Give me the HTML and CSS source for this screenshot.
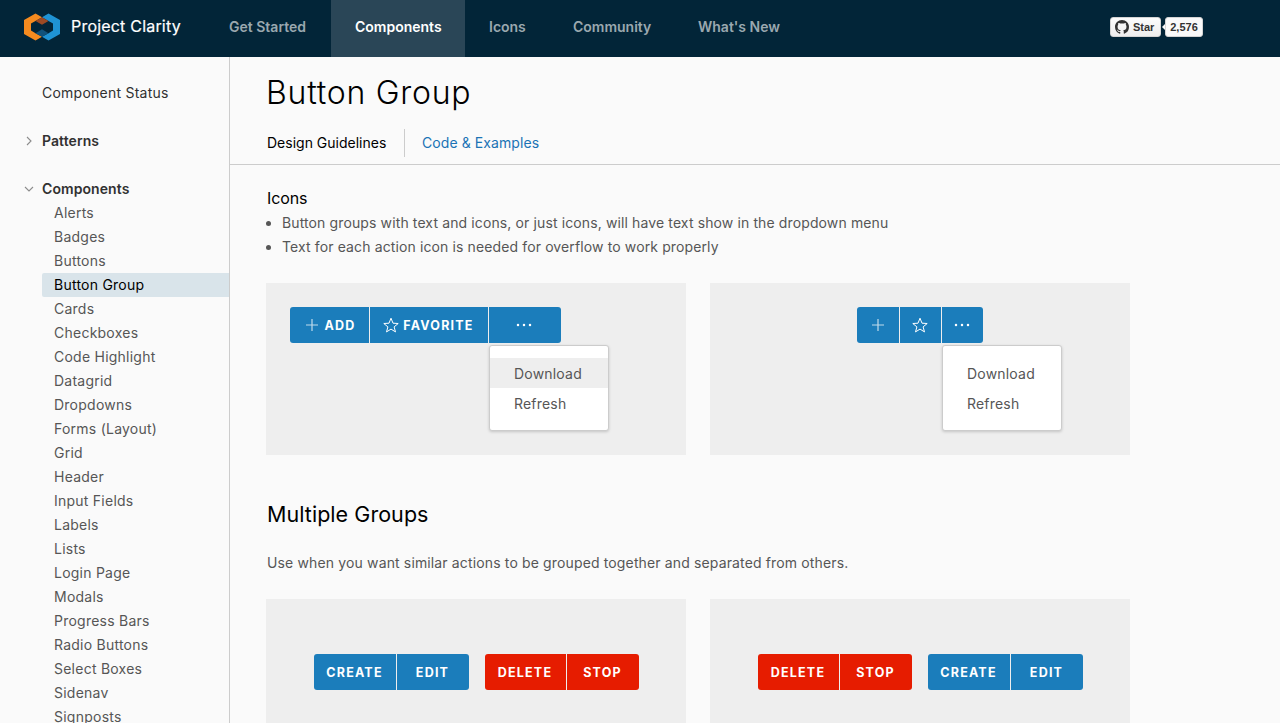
FILE: index.html
```html
<!DOCTYPE html>
<html lang="en">
<head>
<meta charset="utf-8">
<title>Project Clarity - Button Group</title>
<link rel="stylesheet" href="styles.css">
</head>
<body>
<svg class="defs" width="0" height="0">
  <symbol id="plus" viewBox="0 0 16 16"><path d="M8 2v12M2 8h12" stroke="#fff" stroke-opacity=".72" stroke-width="1.2" fill="none"/></symbol>
  <symbol id="star" viewBox="0 0 16 16"><path d="M8 1.2l2 5 5.2.3-4.1 3.4 1.4 5L8 12.1l-4.5 2.8 1.4-5L.8 6.5 6 6.2z" stroke="#fff" stroke-width="1" stroke-linejoin="round" fill="none"/></symbol>
  <symbol id="dots" viewBox="0 0 16 16"><circle cx="2" cy="8" r="1.25" fill="#fff"/><circle cx="8" cy="8" r="1.25" fill="#fff"/><circle cx="14" cy="8" r="1.25" fill="#fff"/></symbol>
</svg>
<header class="header">
  <a class="brand">
    <svg class="logo" width="36" height="28" viewBox="0 0 36 28">
      <path fill="#1f93d4" d="M24.500.5L36 7v14l-11.500 6.500L18 23.800l6.500-3.600 4.500-2.700v-7L24.500 8 18 4.200z"/>
      <path fill="#f58b1f" d="M11.500.5L18 4.200 11.500 8 7 10.500v7l4.500 2.700 6.500 3.600-6.500 3.700L0 21V7z"/>
      <path fill="#9c4a24" d="M18 4.200L24.500 8 18 11.700 11.500 8z"/>
      <path fill="#11527b" d="M18 16.300l6.500 3.900-6.500 3.600-6.500-3.600z"/>
    </svg>
    <span class="brand-name">Project Clarity</span>
  </a>
  <nav class="nav">
    <a>Get Started</a>
    <a class="active">Components</a>
    <a>Icons</a>
    <a>Community</a>
    <a>What's New</a>
  </nav>
  <div class="github">
    <a class="gh-star"><svg width="14" height="14" viewBox="0 0 16 16"><path fill="#333" d="M8 0C3.580 0 0 3.580 0 8c0 3.540 2.290 6.530 5.470 7.590.4.070.55-.17.55-.38 0-.19-.01-.82-.01-1.490-2.010.37-2.530-.49-2.690-.94-.09-.23-.48-.94-.82-1.130-.28-.15-.68-.52-.01-.53.63-.01 1.080.58 1.230.82.72 1.210 1.870.87 2.330.66.07-.52.28-.87.51-1.070-1.780-.2-3.640-.89-3.640-3.950 0-.87.31-1.590.82-2.150-.08-.2-.36-1.020.08-2.120 0 0 .67-.21 2.200.82a7.600 7.600 0 0 1 4 0c1.530-1.040 2.200-.82 2.200-.82.44 1.100.16 1.920.08 2.120.51.56.82 1.270.82 2.150 0 3.070-1.870 3.750-3.650 3.950.29.25.54.73.54 1.480 0 1.070-.01 1.930-.01 2.200 0 .21.15.46.55.38A8.010 8.010 0 0 0 16 8c0-4.420-3.580-8-8-8z"/></svg>Star</a>
    <a class="gh-count">2,576</a>
  </div>
</header>
<div class="page">
  <aside class="sidebar">
    <a class="top status">Component Status</a>
    <a class="top bold"><svg class="caret" width="10" height="10" viewBox="0 0 10 10"><path d="M3 1l4 4-4 4"/></svg>Patterns</a>
    <a class="top bold open"><svg class="caret" width="10" height="10" viewBox="0 0 10 10"><path d="M1 3l4 4 4-4"/></svg>Components</a>
    <ul class="links">
      <li>Alerts</li><li>Badges</li><li>Buttons</li><li class="current">Button Group</li><li>Cards</li><li>Checkboxes</li><li>Code Highlight</li><li>Datagrid</li><li>Dropdowns</li><li>Forms (Layout)</li><li>Grid</li><li>Header</li><li>Input Fields</li><li>Labels</li><li>Lists</li><li>Login Page</li><li>Modals</li><li>Progress Bars</li><li>Radio Buttons</li><li>Select Boxes</li><li>Sidenav</li><li>Signposts</li>
    </ul>
  </aside>
  <main class="main">
    <div class="title-area">
      <h1>Button Group</h1>
      <div class="tabs"><a class="tab-on">Design Guidelines</a><a class="tab-link">Code &amp; Examples</a></div>
    </div>
    <div class="content">
      <h4>Icons</h4>
      <ul class="bullets">
        <li>Button groups with text and icons, or just icons, will have text show in the dropdown menu</li>
        <li>Text for each action icon is needed for overflow to work properly</li>
      </ul>
      <div class="cards">
        <div class="card">
          <div class="group">
            <a class="btn w-add"><svg width="16" height="16"><use href="#plus"/></svg>ADD</a>
            <a class="btn w-fav"><svg width="16" height="16"><use href="#star"/></svg>FAVORITE</a>
            <div class="more"><a class="btn w-std dots"><svg width="16" height="16"><use href="#dots"/></svg></a>
              <div class="menu"><a class="hover">Download</a><a>Refresh</a></div></div>
          </div>
        </div>
        <div class="card card-mid">
          <div class="group">
            <a class="btn w-icon1"><svg width="16" height="16"><use href="#plus"/></svg></a>
            <a class="btn w-icon"><svg width="16" height="16"><use href="#star"/></svg></a>
            <div class="more"><a class="btn w-icon"><svg width="16" height="16"><use href="#dots"/></svg></a>
              <div class="menu"><a>Download</a><a>Refresh</a></div></div>
          </div>
        </div>
      </div>
      <h3>Multiple Groups</h3>
      <p class="lead">Use when you want similar actions to be grouped together and separated from others.</p>
      <div class="cards">
        <div class="card card-multi">
          <div class="group"><a class="btn w-create">CREATE</a><a class="btn w-std">EDIT</a></div>
          <div class="group"><a class="btn red w-delete">DELETE</a><a class="btn red w-std">STOP</a></div>
        </div>
        <div class="card card-multi">
          <div class="group"><a class="btn red w-delete">DELETE</a><a class="btn red w-std">STOP</a></div>
          <div class="group"><a class="btn w-create">CREATE</a><a class="btn w-std">EDIT</a></div>
        </div>
      </div>
    </div>
  </main>
</div>
</body>
</html>
```
FILE: styles.css
```css
* { box-sizing: border-box; }
html, body { height: 100%; margin: 0; overflow: hidden; }
body { display: flex; flex-direction: column; background: #fafafa; color: #565656; font: 14px/24px Inter, "Open Sans", sans-serif; letter-spacing: .12px; }
.defs { display: none; }
ul { list-style: none; margin: 0; padding: 0; }
h1, h3, h4, p { margin: 0; font-weight: 400; }
.header { flex: none; display: flex; height: 57px; background: #022538; }
.brand { display: flex; width: 205px; padding: 13px 0 0 24px; gap: 11px; color: #fff; white-space: nowrap; }
.logo { flex: none; }
.brand-name { font-size: 16px; line-height: 27px; letter-spacing: .2px; -webkit-text-stroke: .2px #fff; }
.nav { display: grid; grid-template-columns: 126px 134px 84px 125px 130px; width: 599px; letter-spacing: 0; }
.nav a { padding-left: 24px; line-height: 54px; font-weight: 600; color: #9aa8af; white-space: nowrap; }
.nav .active { background: #2a4657; color: #fff; }
.github { display: flex; gap: 5px; margin-left: 306px; padding-top: 17px; font: bold 11px/19px "Liberation Sans", sans-serif; color: #333; letter-spacing: 0; }
.gh-star, .gh-count { display: flex; align-items: center; height: 20px; border-radius: 3px; border: 1px solid #d4d4d4; }
.gh-star { width: 51px; gap: 4px; padding-left: 4px; background: linear-gradient(#fcfcfc, #eee); }
.gh-count { position: relative; width: 38px; justify-content: center; margin-left: -1px; background: #fafafa; }
.gh-count::before { content: ""; position: absolute; left: -4px; top: 6px; border: 3px solid transparent; border-right-color: #fafafa; border-left: 0; }
.page { flex: 1; min-height: 0; display: flex; }
.sidebar { flex: none; width: 230px; padding-top: 24px; border-right: 1px solid #ccc; overflow: hidden; letter-spacing: .24px; }
.top { display: flex; align-items: center; height: 24px; margin-bottom: 24px; padding-left: 24px; color: #313131; gap: 8px; }
.status { padding-left: 42px; }
.bold { font-weight: 600; letter-spacing: .08px; }
.open { margin-bottom: 0; }
.caret { flex: none; fill: none; stroke: #8c8c8c; stroke-width: 1.1; }
.links { margin-left: 42px; }
.links li { height: 24px; padding-left: 12px; }
.links .current { background: #d9e4ea; color: #000; border-radius: 2px 0 0 2px; }
.main { flex: 1; min-width: 0; }
.title-area { height: 108px; padding: 12px 0 0 36px; border-bottom: 1px solid #ccc; }
h1 { font-size: 32px; line-height: 48px; font-weight: 300; color: #000; letter-spacing: .75px; }
.tabs { display: flex; margin: 12px 0 0 1px; line-height: 28px; letter-spacing: 0; }
.tab-on { width: 138px; border-right: 1px solid #ccc; color: #000; }
.tab-link { padding-left: 17px; color: #1b73b5; letter-spacing: .08px; }
.content { padding: 21px 0 0 36px; }
h4 { font-size: 16px; line-height: 24px; color: #000; padding-left: 1px; letter-spacing: -.1px; }
.bullets { margin: 1px 0 24px; }
.bullets li { display: flex; align-items: center; gap: 11px; height: 24px; }
.bullets li::before { content: ""; width: 5px; height: 5px; border-radius: 50%; background: #565656; }
.cards { display: grid; grid-template-columns: 420px 420px; gap: 24px; }
.card { height: 172px; padding: 24px; background: #eee; }
.card-mid { display: flex; justify-content: center; }
.card-multi { display: flex; justify-content: center; gap: 16px; padding: 55px 0 0; }
.group { display: flex; gap: 1px; height: 36px; }
.btn { display: flex; align-items: center; justify-content: center; height: 36px; padding-top: 1px; background: #1b7dbb; color: #fff; font: bold 12.5px/35px Inter, sans-serif; letter-spacing: 1.2px; }
.btn svg { flex: none; margin-top: -1px; }
.btn.red { background: #e61c00; }
.group > :first-child { border-radius: 3px 0 0 3px; }
.group > :last-child, .more .btn { border-radius: 0 3px 3px 0; }
.w-add { width: 79px; gap: 5px; }
.w-fav { width: 118px; gap: 4px; padding-right: 1px; }
.w-std { width: 72px; }
.dots { padding-right: 2px; }
.w-icon { width: 41px; padding-right: 1px; }
.w-icon1 { width: 42px; }
.w-create { width: 82px; }
.w-delete { width: 81px; }
.more { position: relative; }
.menu { position: absolute; top: 38px; left: 0; width: 120px; height: 86px; padding: 12px 0; background: #fff; border: 1px solid #ccc; border-radius: 3px; box-shadow: 0 1px 3px rgba(0,0,0,.18); letter-spacing: .2px; }
.menu a { display: block; height: 30px; padding-left: 24px; line-height: 31px; }
.menu .hover { background: #eee; }
h3 { margin-top: 43px; padding-left: 1px; font-size: 21.500px; line-height: 32px; color: #000; letter-spacing: .05px; }
.lead { margin: 21px 0 24px 1px; letter-spacing: .14px; }
```
